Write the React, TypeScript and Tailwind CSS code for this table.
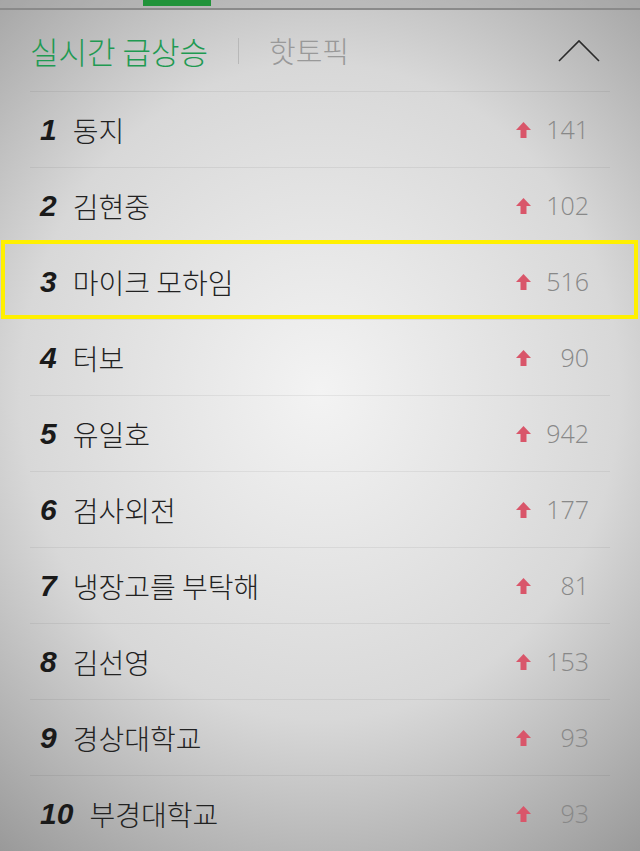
import React from "react";

const rows = [
  { r: 1, name: "동지", v: "141" },
  { r: 2, name: "김현중", v: "102" },
  { r: 3, name: "마이크 모하임", v: "516" },
  { r: 4, name: "터보", v: "90" },
  { r: 5, name: "유일호", v: "942" },
  { r: 6, name: "검사외전", v: "177" },
  { r: 7, name: "냉장고를 부탁해", v: "81" },
  { r: 8, name: "김선영", v: "153" },
  { r: 9, name: "경상대학교", v: "93" },
  { r: 10, name: "부경대학교", v: "93" },
];

const kr = { fontFamily: '"Noto Sans CJK KR", "Noto Sans", sans-serif' };

function Arrow() {
  return (
    <svg width="15" height="16" viewBox="0 0 15 16" className="shrink-0">
      <path d="M7.5 0 L15 8 L10.5 8 L10.5 16 L4.5 16 L4.5 8 L0 8 Z" fill="#d9566a" />
    </svg>
  );
}

export default function App() {
  return (
    <div className="w-[640px] h-[851px] overflow-hidden relative bg-[radial-gradient(ellipse_85%_70%_at_50%_46%,#f3f3f3_0%,#d8d8d8_55%,#959595_100%)]">
      <div className="h-[10px] border-b-2 border-[#8a8a8a] bg-[#a6a6a6]/40 relative">
        <div className="absolute left-[143px] top-0 w-[68px] h-[6px] bg-[#21933a]" />
      </div>
      <div className="h-[81px] flex items-center pl-[30px] pr-[40px]" style={kr}>
        <span className="text-[31px] font-light text-[#1f9a52] leading-none">실시간 급상승</span>
        <span className="ml-[30px] mr-[30px] w-px h-[26px] bg-[#b8b8b8]" />
        <span className="text-[29px] font-light text-[#999] leading-none">핫토픽</span>
        <div className="flex-1" />
        <svg width="42" height="24" viewBox="0 0 42 24">
          <path d="M1 22 L21 2 L41 22" fill="none" stroke="#2a2a2a" strokeWidth="1.6" />
        </svg>
      </div>
      {rows.map((row) => (
        <div key={row.r} className="relative">
          <div className="mx-[30px] h-px bg-black/[0.06]" />
          <div className="h-[75px] flex items-center pl-[40px] pr-[51px]">
            <span
              className="text-[30px] font-bold italic text-[#1a1a1a] leading-none"
              style={{ fontFamily: '"Liberation Sans", Arial, sans-serif' }}
            >
              {row.r}
            </span>
            <span className="ml-[16px] text-[28px] font-light text-[#222] leading-none" style={kr}>
              {row.name}
            </span>
            <div className="flex-1" />
            <Arrow />
            <span
              className="w-[58px] text-right text-[25px] font-light text-[#888] leading-none"
              style={{ fontFamily: '"Open Sans", "Noto Sans", sans-serif' }}
            >
              {row.v}
            </span>
          </div>
          {row.r === 3 && (
            <div className="absolute left-[1px] right-[2px] -top-[3px] bottom-[0px] border-[4px] border-[#fff000]" />
          )}
        </div>
      ))}
    </div>
  );
}
